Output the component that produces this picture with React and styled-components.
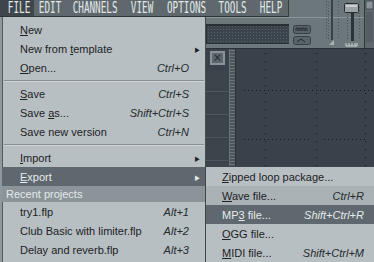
import React from 'react';
import styled, { createGlobalStyle } from 'styled-components';

const GlobalStyle = createGlobalStyle`
  html, body { margin: 0; padding: 0; background: #39424a; }
  body { width: 374px; height: 262px; overflow: hidden; }
`;

const Screen = styled.div`
  position: relative;
  width: 374px;
  height: 262px;
  overflow: hidden;
  display: grid;
  grid-template-columns: 289px 1fr;
  grid-template-rows: 17px 31px 1fr;
  font-family: "Liberation Sans", Arial, sans-serif;
  background: #39424a;
`;

const MenuBar = styled.div`
  grid-column: 1;
  grid-row: 1;
  display: flex;
  background: #5f696d;
  border-bottom: 1px solid #2e3538;
  border-right: 1px solid #353d41;
  box-sizing: border-box;
`;

const BarTitle = styled.div`
  flex: 0 0 ${p => p.$w}px;
  display: flex;
  align-items: center;
  justify-content: center;
  padding-left: ${p => p.$pad || 0}px;
  box-sizing: border-box;
  overflow: hidden;
  background: ${p => (p.$active ? '#3d464a' : 'transparent')};
  color: #e3e9eb;
  font-family: "DejaVu Sans Mono", monospace;
  font-size: 15px;
  line-height: 17px;

  span {
    display: inline-block;
    white-space: nowrap;
    transform: scaleX(0.62);
  }
`;

const ToolPanel = styled.div`
  grid-column: 1;
  grid-row: 2;
  display: flex;
  justify-content: flex-end;
  align-items: flex-end;
  padding: 0 0 4px;
  background: #6c777c;
  border-top: 1px solid #8a9599;
  box-sizing: border-box;
`;

const Display = styled.div`
  width: 83px;
  height: 20px;
  box-sizing: border-box;
  background-color: #3b444a;
  background-image: radial-gradient(#56616a 0.7px, transparent 0.9px);
  background-size: 3px 3px;
  border: 1px solid #2a3135;
  border-right: none;
  box-shadow: inset 0 1px 0 #262c30;
`;

const Mixer = styled.div`
  grid-column: 2;
  grid-row: 1 / span 2;
  background: #6c777c;
  svg { display: block; }
`;

const Workspace = styled.div`
  grid-column: 1 / -1;
  grid-row: 3;
  display: flex;
  background: #39424a;
  border-top: 1px solid #2b3236;
`;

const Spacer = styled.div`
  flex: 0 0 205px;
`;

const Channels = styled.div`
  flex: 0 0 23px;
  display: flex;
  flex-direction: column;
  gap: 2px;
  padding-top: 2px;
`;

const CloseBtn = styled.div`
  width: 15px;
  height: 14px;
  margin: 0 0 4px 5px;
  box-sizing: border-box;
  border: 2px solid #8a9498;
  background: #5c666b;
  color: #1f2427;
  font-family: "DejaVu Sans", sans-serif;
  font-size: 10px;
  line-height: 10px;
  text-align: center;
`;

const Strip = styled.div`
  height: 20px;
  background-color: #2e363b;
  background-image: radial-gradient(#4c565d 0.6px, transparent 0.8px);
  background-size: 2px 2px;
  border-bottom: 1px solid #4d575c;
`;

const Divider = styled.div`
  flex: 0 0 5px;
  margin-left: 1px;
  background-color: #4b555a;
  background-image: radial-gradient(#6c777c 0.6px, transparent 0.8px);
  background-size: 2px 3px;
  border-left: 1px solid #6a757a;
  border-right: 1px solid #2b3236;
`;

const Grid = styled.div`
  flex: 1;
  svg { display: block; }
`;

const Menu = styled.div`
  position: absolute;
  left: 0;
  top: 17px;
  width: 206px;
  height: 250px;
  box-sizing: border-box;
  padding-top: 3px;
  background: #b7bfc3;
  border-left: 2px solid #8f989c;
  border-right: 1px solid #444d51;
  box-shadow: inset 1px 0 0 #525b60;
`;

const SubMenu = styled.div`
  position: absolute;
  left: 205px;
  top: 166px;
  width: 175px;
  height: 100px;
  box-sizing: border-box;
  background: #b7bfc3;
  border-top: 1px solid #3d464a;
  border-left: 1px solid #3d464a;
`;

const Item = styled.div`
  height: 19px;
  display: grid;
  grid-template-columns: 1fr auto ${p => (p.$sub ? 0 : 16)}px;
  align-items: center;
  padding: 0 ${p => (p.$sub ? 16 : 0)}px 0 ${p => (p.$sub ? 16 : 18)}px;
  font-size: 11px;
  white-space: nowrap;
  color: ${p => (p.$active ? '#e6ebed' : '#1d2225')};
  background: ${p => (p.$active ? '#5e686e' : p.$soft ? '#aab2b6' : 'transparent')};

  u { text-decoration: underline; text-underline-offset: 1px; }
`;

const Shortcut = styled.span`
  font-style: italic;
  text-align: right;
  color: ${p => (p.$active ? '#e6ebed' : '#252a2d')};
`;

const Arrow = styled.span`
  font-size: 9px;
  text-align: center;
  transform: scaleY(1.2);
`;

const Separator = styled.div`
  height: 7px;
  display: flex;
  align-items: center;
  padding: 0 1px 0 2px;

  &::after {
    content: '';
    flex: 1;
    height: 1px;
    background: #878f93;
    box-shadow: 0 1px 0 #cdd3d6;
  }
`;

const SectionHeader = styled.div`
  height: 16px;
  display: flex;
  align-items: center;
  padding-left: 4px;
  background: #8b9599;
  color: #e4e9eb;
  font-size: 11px;
`;

const barTitles = [
  { label: 'FILE', w: 34, pad: 4, active: true },
  { label: 'EDIT', w: 32 },
  { label: 'CHANNELS', w: 58 },
  { label: 'VIEW', w: 37 },
  { label: 'OPTIONS', w: 51 },
  { label: 'TOOLS', w: 42 },
  { label: 'HELP', w: 35 },
];

function MixerArt() {
  const dots = [];
  for (let y = 1; y < 40; y += 3) {
    dots.push(<rect key={'a' + y} x={37} y={y} width={1} height={1} fill="#4a5459" />);
    dots.push(<rect key={'b' + y} x={39} y={y + 1} width={1} height={1} fill="#4a5459" />);
    dots.push(<rect key={'c' + y} x={49} y={y} width={1} height={1} fill="#4a5459" />);
    dots.push(<rect key={'d' + y} x={58} y={y + 1} width={1} height={1} fill="#4a5459" />);
    dots.push(<rect key={'e' + y} x={70} y={y} width={1} height={1} fill="#4a5459" />);
  }
  return (
    <svg width="85" height="48" viewBox="0 0 85 48">
      <rect width="85" height="48" fill="#6c777c" />
      <rect x="0" y="17" width="85" height="1" fill="#8a9599" />
      {dots}
      {/* small buttons */}
      <rect x="4.5" y="25.5" width="17" height="8" rx="2" fill="#59636a" stroke="#353d42" />
      <path d="M7 31v-3h2v3M10 31v-3h2v3M13 31v-3h2v3M16 31v-3h2v3" stroke="#1f2529" fill="none" strokeWidth="0.8" />
      <rect x="4.5" y="36.5" width="17" height="8" rx="2" fill="#59636a" stroke="#353d42" />
      <path d="M8 42l4-3 4 3" stroke="#1f2529" fill="none" strokeWidth="1" />
      {/* level meter line */}
      <rect x="42" y="0" width="2" height="40" fill="#3a4247" />
      <path d="M40 45l5-5v5z" fill="#aab2b6" />
      {/* slider */}
      <rect x="62" y="8" width="3" height="33" fill="#2c3338" />
      <rect x="55.5" y="3.5" width="14" height="9" rx="1" fill="#9aa3a8" stroke="#262c30" />
      <rect x="57" y="5" width="11" height="2" fill="#c8cfd2" />
      <path d="M57 43v3h11v-3M60 43v3M63 43v3M66 43v3" stroke="#d0d6d9" fill="none" strokeWidth="1" />
      {/* scrollbar */}
      <rect x="75" y="0" width="10" height="48" fill="#5e686d" />
      <rect x="75" y="0" width="1" height="48" fill="#2f373b" />
      <rect x="77" y="1" width="7" height="8" fill="#8a9498" stroke="#3a4246" strokeWidth="0.8" />
      <rect x="77" y="12" width="7" height="30" fill="#535d62" />
    </svg>
  );
}

function GridArt() {
  const dots = [];
  const step = 4;
  // vertical dotted beat lines
  [29, 80, 129].forEach(x => {
    for (let y = 4; y < 214; y += 8) dots.push(<rect key={`v${x}-${y}`} x={x} y={y} width={1} height={1} fill="#121619" />);
  });
  // horizontal dotted lines
  for (let x = 8; x < 141; x += step) {
    dots.push(<rect key={`h1-${x}`} x={x} y={41} width={1} height={1} fill="#121619" />);
    if (x < 74 || (x > 86 && x < 130)) dots.push(<rect key={`h2-${x}`} x={x} y={90} width={1} height={1} fill="#121619" />);
  }
  return (
    <svg width="141" height="214" viewBox="0 0 141 214">
      {dots}
    </svg>
  );
}

const Accel = ({ children }) => <u>{children}</u>;

export default function App() {
  return (
    <>
      <GlobalStyle />
      <Screen>
        <MenuBar>
          {barTitles.map(t => (
            <BarTitle key={t.label} $w={t.w} $pad={t.pad} $active={t.active}>
              <span>{t.label}</span>
            </BarTitle>
          ))}
        </MenuBar>
        <ToolPanel>
          <Display />
        </ToolPanel>
        <Mixer>
          <MixerArt />
        </Mixer>
        <Workspace>
          <Spacer />
          <Channels>
            <CloseBtn>×</CloseBtn>
            <Strip />
            <Strip />
            <Strip />
            <Strip />
            <Strip />
            <Strip />
            <Strip />
            <Strip />
          </Channels>
          <Divider />
          <Grid>
            <GridArt />
          </Grid>
        </Workspace>

        <Menu>
          <Item><span><Accel>N</Accel>ew</span><Shortcut /><Arrow /></Item>
          <Item><span>New from <Accel>t</Accel>emplate</span><Shortcut /><Arrow>▸</Arrow></Item>
          <Item><span><Accel>O</Accel>pen...</span><Shortcut>Ctrl+O</Shortcut><Arrow /></Item>
          <Separator />
          <Item><span><Accel>S</Accel>ave</span><Shortcut>Ctrl+S</Shortcut><Arrow /></Item>
          <Item><span>Save <Accel>a</Accel>s...</span><Shortcut>Shift+Ctrl+S</Shortcut><Arrow /></Item>
          <Item><span>Save new version</span><Shortcut>Ctrl+N</Shortcut><Arrow /></Item>
          <Separator />
          <Item><span><Accel>I</Accel>mport</span><Shortcut /><Arrow>▸</Arrow></Item>
          <Item $active><span><Accel>E</Accel>xport</span><Shortcut $active /><Arrow>▸</Arrow></Item>
          <SectionHeader>Recent projects</SectionHeader>
          <Item><span>try1.flp</span><Shortcut>Alt+1</Shortcut><Arrow /></Item>
          <Item><span>Club Basic with limiter.flp</span><Shortcut>Alt+2</Shortcut><Arrow /></Item>
          <Item><span>Delay and reverb.flp</span><Shortcut>Alt+3</Shortcut><Arrow /></Item>
        </Menu>

        <SubMenu>
          <Item $sub><span><Accel>Z</Accel>ipped loop package...</span><Shortcut /><span /></Item>
          <Item $sub $soft><span><Accel>W</Accel>ave file...</span><Shortcut>Ctrl+R</Shortcut><span /></Item>
          <Item $sub $active><span>MP<Accel>3</Accel> file...</span><Shortcut $active>Shift+Ctrl+R</Shortcut><span /></Item>
          <Item $sub><span><Accel>O</Accel>GG file...</span><Shortcut /><span /></Item>
          <Item $sub><span><Accel>M</Accel>IDI file...</span><Shortcut>Shift+Ctrl+M</Shortcut><span /></Item>
        </SubMenu>
      </Screen>
    </>
  );
}
